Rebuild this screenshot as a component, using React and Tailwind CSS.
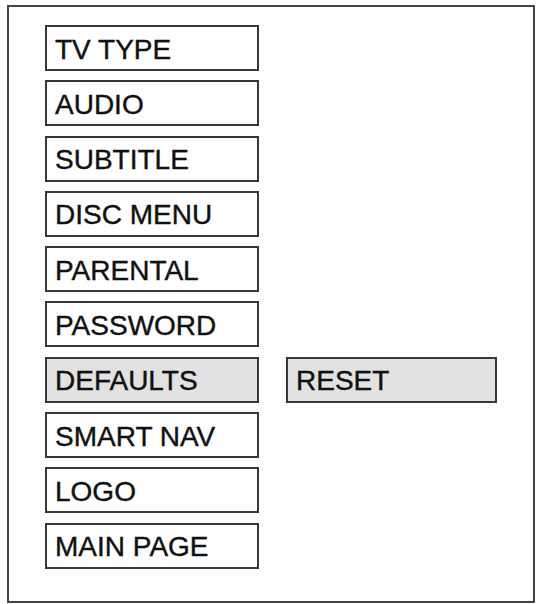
const ITEMS = [
  'TV TYPE',
  'AUDIO',
  'SUBTITLE',
  'DISC MENU',
  'PARENTAL',
  'PASSWORD',
  'DEFAULTS',
  'SMART NAV',
  'LOGO',
  'MAIN PAGE',
]

function Box({ label, active, className = '' }) {
  return (
    <div
      className={`h-[46px] border-2 border-[#383838] flex items-center pl-[8px] pt-[3px] text-[28px] leading-none text-[#111] [-webkit-text-stroke:0.4px_#111] ${active ? 'bg-[#e2e2e2]' : 'bg-white'} ${className}`}
    >
      {label}
    </div>
  )
}

export default function App() {
  return (
    <div className="w-[539px] h-[604px] bg-white pt-[5px] pl-[7px]" style={{ fontFamily: '"Liberation Sans", Arial, sans-serif' }}>
      <div className="w-[528px] h-[598px] border-2 border-[#444] pl-[36px] pt-[18px]">
        <div className="flex flex-col gap-[9.3px]">
          {ITEMS.map(item => (
            <div key={item} className="flex gap-[27px]">
              <Box label={item} active={item === 'DEFAULTS'} className="w-[214px]" />
              {item === 'DEFAULTS' && <Box label="RESET" active className="w-[211px]" />}
            </div>
          ))}
        </div>
      </div>
    </div>
  )
}
